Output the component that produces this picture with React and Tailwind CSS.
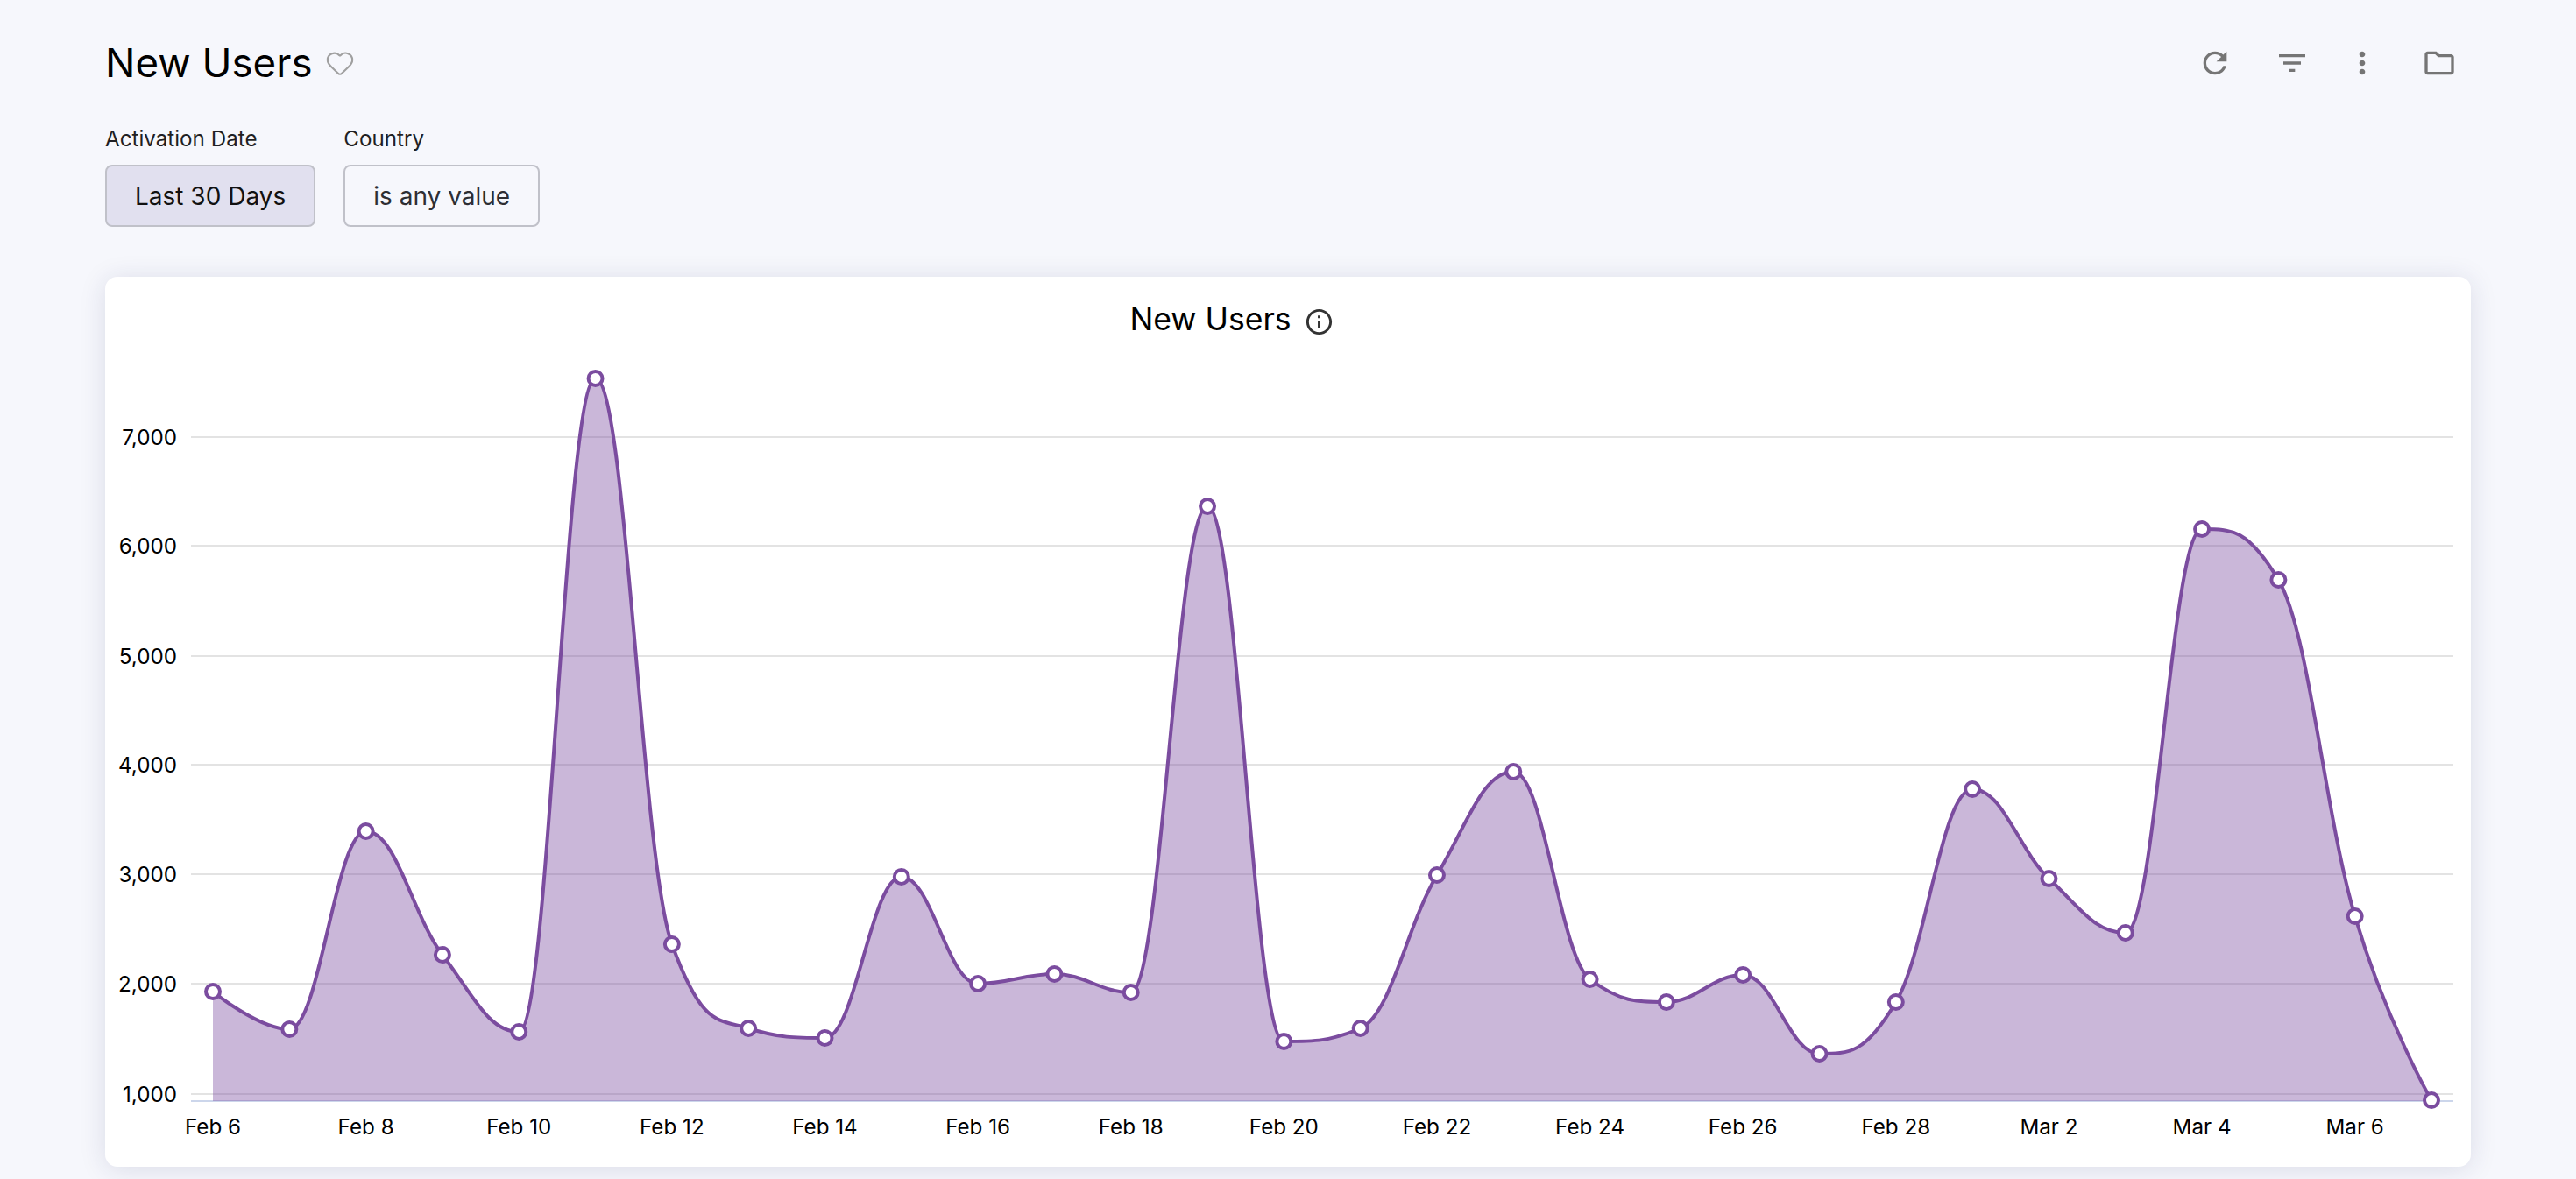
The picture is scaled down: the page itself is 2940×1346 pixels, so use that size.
import React from 'react'
import { MdRefresh, MdFilterList, MdMoreVert, MdOutlineFolder, MdInfoOutline } from 'react-icons/md'
import { Heart } from 'lucide-react'

// page px of each daily point, Feb 6 to Mar 7
const ys = [1132, 1175, 949, 1090, 1178, 432, 1078, 1174, 1185, 1001, 1123, 1112, 1133, 578, 1189, 1174, 999, 881, 1118, 1144, 1113, 1203, 1144, 901, 1003, 1065, 604, 662, 1046, 1256]
const xStart = 243
const xStep = (2775 - 243) / 29
const points = ys.map((y, i) => ({ x: xStart + i * xStep, y }))

const xLabels = ['Feb 6', 'Feb 8', 'Feb 10', 'Feb 12', 'Feb 14', 'Feb 16', 'Feb 18', 'Feb 20', 'Feb 22', 'Feb 24', 'Feb 26', 'Feb 28', 'Mar 2', 'Mar 4', 'Mar 6']
const yLabels = ['7,000', '6,000', '5,000', '4,000', '3,000', '2,000', '1,000']
const gridYs = [499, 623, 749, 873, 998, 1123, 1249]
const baseY = 1257

function buildLine(pts) {
  const conts = pts.map((p, i) => {
    const last = pts[i - 1]
    const next = pts[i + 1]
    if (!last || !next) return { lx: p.x, ly: p.y, rx: p.x, ry: p.y }
    const lx = (1.5 * p.x + last.x) / 2.5
    const rx = (1.5 * p.x + next.x) / 2.5
    let ly = (1.5 * p.y + last.y) / 2.5
    let ry = (1.5 * p.y + next.y) / 2.5
    const fix = ((ry - ly) * (rx - p.x)) / (rx - lx) + p.y - ry
    ly += fix
    ry += fix
    if (ly > last.y && ly > p.y) {
      ly = Math.max(last.y, p.y)
      ry = 2 * p.y - ly
    } else if (ly < last.y && ly < p.y) {
      ly = Math.min(last.y, p.y)
      ry = 2 * p.y - ly
    }
    if (ry > next.y && ry > p.y) {
      ry = Math.max(next.y, p.y)
      ly = 2 * p.y - ry
    } else if (ry < next.y && ry < p.y) {
      ry = Math.min(next.y, p.y)
      ly = 2 * p.y - ry
    }
    return { lx, ly, rx, ry }
  })
  let d = `M ${pts[0].x} ${pts[0].y}`
  for (let i = 1; i < pts.length; i++) {
    const a = conts[i - 1]
    const b = conts[i]
    d += ` C ${a.rx} ${a.ry} ${b.lx} ${b.ly} ${pts[i].x} ${pts[i].y}`
  }
  return d
}

function Chart() {
  const line = buildLine(points)
  const area = `${line} L ${points[29].x} ${baseY} L ${points[0].x} ${baseY} Z`
  return (
    <svg viewBox="120 416 2700 916" className="block w-[2700px] h-[916px]" style={{ fontFamily: 'Inter, sans-serif' }}>
      {yLabels.map((label, i) => (
        <g key={label}>
          <line x1="218" x2="2800" y1={gridYs[i]} y2={gridYs[i]} stroke="#e3e3e3" strokeWidth="2" />
          <text x="202" y={gridYs[i] + 9} textAnchor="end" fontSize="24.2" fill="#000">{label}</text>
        </g>
      ))}
      <line x1="218" x2="2800" y1={baseY} y2={baseY} stroke="#ccd6eb" strokeWidth="2" />
      {xLabels.map((label, i) => (
        <text key={label} x={points[i * 2].x} y="1295" textAnchor="middle" fontSize="24.2" fill="#000">{label}</text>
      ))}
      <path d={area} fill="#7b4c9f" fillOpacity="0.4" />
      <path d={line} fill="none" stroke="#7b4c9f" strokeWidth="4" />
      {points.map((p) => (
        <circle key={p.x} cx={p.x} cy={p.y} r="8" fill="#fff" stroke="#7b4c9f" strokeWidth="4" />
      ))}
    </svg>
  )
}

function Filter({ label, value, active }) {
  return (
    <div className="flex flex-col">
      <span className="text-[24.2px] leading-[32px] text-[#1f1f24] mb-[13px]">{label}</span>
      <button className={`h-[71px] pt-[1px] px-[32px] rounded-[8px] border-2 border-[#c0c1c9] text-[28px] ${active ? 'bg-[#e1e0ef] text-[#111]' : 'bg-[#f6f7fc] text-[#2e2e33]'}`}>
        {value}
      </button>
    </div>
  )
}

export default function App() {
  return (
    <div className="h-[1346px] overflow-hidden bg-[#f6f7fc] px-[120px] font-['Inter',sans-serif] text-black">
      <div className="flex items-center justify-between pt-[32px] h-[112px]">
        <div className="flex items-center">
          <h1 className="text-[45.7px] leading-[80px] font-normal">New Users</h1>
          <Heart size={34} strokeWidth={1.5} className="ml-[14px] text-[#a0a0a0]" />
        </div>
        <div className="flex items-center pr-[16px] text-[#757575]">
          <MdRefresh size={40} />
          <MdFilterList size={40} className="ml-[48px]" />
          <MdMoreVert size={40} className="ml-[40px]" />
          <MdOutlineFolder size={40} className="ml-[48px]" />
        </div>
      </div>
      <div className="flex gap-[32px] mt-[31px]">
        <Filter label="Activation Date" value="Last 30 Days" active />
        <Filter label="Country" value="is any value" />
      </div>
      <div className="mt-[57px] h-[1016px] rounded-[14px] bg-white shadow-[0_3px_30px_rgba(30,40,90,0.13)]">
        <div className="flex items-center justify-center h-[100px] pr-[128px] pb-[2px]">
          <span className="text-[35.6px]">New Users</span>
          <MdInfoOutline size={35} className="ml-[14px] mt-[4px] text-[#333]" />
        </div>
        <Chart />
      </div>
    </div>
  )
}
